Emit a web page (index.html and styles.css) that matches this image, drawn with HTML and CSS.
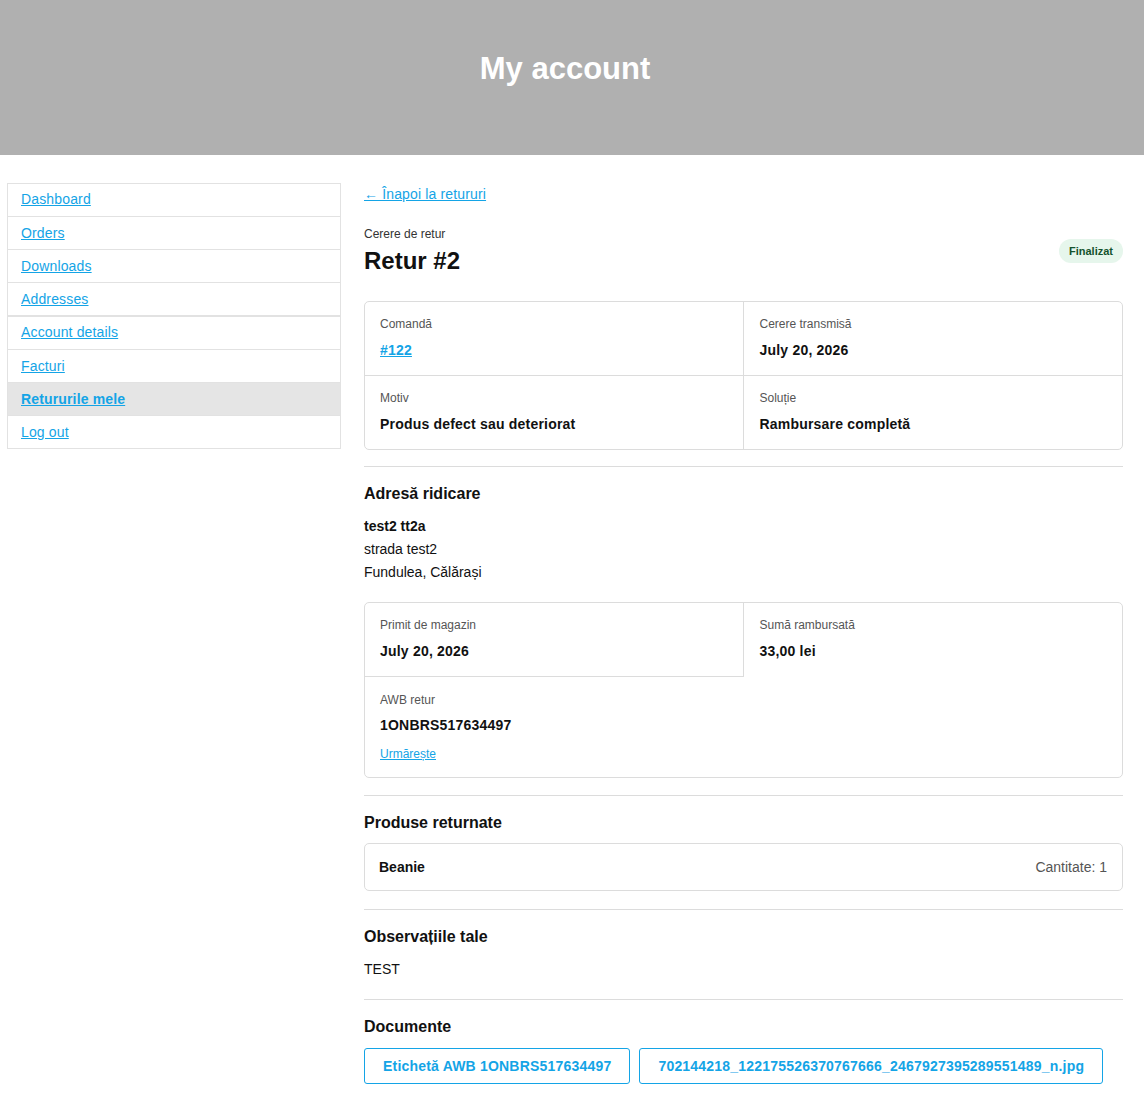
FILE: index.html
```html
<!DOCTYPE html>
<html lang="ro">
<head>
  <meta charset="UTF-8">
  <meta name="viewport" content="width=device-width, initial-scale=1.0">
  <title>My account – Retur #2</title>
  <link rel="stylesheet" href="styles.css">
</head>
<body>
  <header class="page-header">
    <h1>My account</h1>
  </header>

  <div class="account">
    <nav class="account-nav">
      <ul>
        <li class="nav-item"><a href="#">Dashboard</a></li>
        <li class="nav-item"><a href="#">Orders</a></li>
        <li class="nav-item"><a href="#">Downloads</a></li>
        <li class="nav-item nav-item--split"><a href="#">Addresses</a></li>
        <li class="nav-item"><a href="#">Account details</a></li>
        <li class="nav-item"><a href="#">Facturi</a></li>
        <li class="nav-item is-active"><a href="#">Retururile mele</a></li>
        <li class="nav-item"><a href="#">Log out</a></li>
      </ul>
    </nav>

    <main class="account-content">
      <a class="back-link" href="#">&larr; Înapoi la retururi</a>

      <div class="return-head">
        <div>
          <div class="return-kicker">Cerere de retur</div>
          <h2 class="return-title">Retur #2</h2>
        </div>
        <span class="badge">Finalizat</span>
      </div>

      <div class="info-grid">
        <div class="info-cell">
          <div class="info-label">Comandă</div>
          <div class="info-value"><a href="#">#122</a></div>
        </div>
        <div class="info-cell">
          <div class="info-label">Cerere transmisă</div>
          <div class="info-value">July 20, 2026</div>
        </div>
        <div class="info-cell">
          <div class="info-label">Motiv</div>
          <div class="info-value">Produs defect sau deteriorat</div>
        </div>
        <div class="info-cell">
          <div class="info-label">Soluție</div>
          <div class="info-value">Rambursare completă</div>
        </div>
      </div>

      <section class="section section--address">
        <h3>Adresă ridicare</h3>
        <address class="address">
          <strong>test2 tt2a</strong><br>
          strada test2<br>
          Fundulea, Călărași
        </address>

        <div class="info-grid info-grid--shipping">
          <div class="info-cell info-cell--boxed">
            <div class="info-label">Primit de magazin</div>
            <div class="info-value">July 20, 2026</div>
          </div>
          <div class="info-cell">
            <div class="info-label">Sumă rambursată</div>
            <div class="info-value">33,00 lei</div>
          </div>
          <div class="info-cell info-cell--awb">
            <div class="info-label">AWB retur</div>
            <div class="info-value">1ONBRS517634497</div>
            <a class="track-link" href="#">Urmărește</a>
          </div>
        </div>
      </section>

      <section class="section section--products">
        <h3>Produse returnate</h3>
        <div class="product-row">
          <span class="product-name">Beanie</span>
          <span class="product-qty">Cantitate: 1</span>
        </div>
      </section>

      <section class="section">
        <h3>Observațiile tale</h3>
        <p class="notes">TEST</p>
      </section>

      <section class="section section--docs">
        <h3>Documente</h3>
        <div class="docs">
          <a class="doc-btn" href="#">Etichetă AWB 1ONBRS517634497</a>
          <a class="doc-btn" href="#">702144218_122175526370767666_2467927395289551489_n.jpg</a>
        </div>
      </section>
    </main>
  </div>
</body>
</html>
```

FILE: styles.css
```css
body {
  margin: 0;
  font-family: "Liberation Sans", Arial, sans-serif;
  font-size: 14px;
  color: #111;
  background: #fff;
}

a {
  color: #14a4e6;
}

/* grey banner on top */
.page-header {
  background-color: #b0b0b0;
  height: 155px;
  display: flex;
  justify-content: center;
  padding: 49px 14px 0 0;
  box-sizing: border-box;
}
.page-header h1 {
  margin: 0;
  color: #fff;
  font-size: 31px;
  line-height: 40px;
  font-weight: bold;
}

.account {
  display: grid;
  grid-template-columns: 334px 1fr;
  gap: 23px;
  padding: 28px 21px 20px 7px;
}

/* sidebar menu */
.account-nav ul {
  list-style: none;
  margin: 0;
  padding: 0;
  border: 1px solid #e2e2e2;
  border-bottom: none;
}
.nav-item {
  border-bottom: 1px solid #e2e2e2;
  padding: 6px 13px;
  line-height: 20px;
  letter-spacing: 0.15px;
}
.nav-item:first-child {
  padding-top: 5px;
  padding-bottom: 7px;
}
.nav-item--split {
  border-bottom-width: 2px;
}
.nav-item--split + .nav-item {
  padding-top: 5px;
  padding-bottom: 7px;
}
.nav-item.is-active {
  background-color: #e5e5e5;
  font-weight: bold;
}

/* main column */
.back-link {
  display: inline-block;
  line-height: 22px;
  letter-spacing: 0.15px;
}

.return-head {
  display: flex;
  justify-content: space-between;
  align-items: center;
  margin-top: 21px;
}
.return-kicker {
  font-size: 12px;
  line-height: 16px;
  color: #333;
}
.return-title {
  margin: 4px 0 0;
  font-size: 24px;
  line-height: 30px;
}
.badge {
  background-color: #e6f6ec;
  color: #14532d;
  font-size: 11px;
  font-weight: bold;
  padding: 6px 10px;
  border-radius: 12px;
  line-height: 12px;
}

.info-grid {
  display: grid;
  grid-template-columns: 1fr 1fr;
  border: 1px solid #dcdcdc;
  border-radius: 5px;
  margin-top: 25px;
}
.info-cell {
  padding: 14px 16px 15px;
}
.info-grid > .info-cell:nth-child(odd) {
  padding-left: 15px;
}
.info-grid > .info-cell:nth-child(1) {
  border-right: 1px solid #dcdcdc;
  border-bottom: 1px solid #dcdcdc;
}
.info-grid > .info-cell:nth-child(2) {
  border-bottom: 1px solid #dcdcdc;
}
.info-grid > .info-cell:nth-child(3) {
  border-right: 1px solid #dcdcdc;
}
.info-label {
  font-size: 12px;
  line-height: 16px;
  color: #555;
}
.info-value {
  margin-top: 8px;
  font-weight: bold;
  line-height: 20px;
  letter-spacing: 0.2px;
}

/* refund box: only the first cell is boxed */
.info-grid--shipping {
  margin-top: 18px;
}
.info-grid--shipping > .info-cell:nth-child(n) {
  border: none;
}
.info-grid--shipping > .info-cell--boxed:nth-child(1) {
  border-right: 1px solid #dcdcdc;
  border-bottom: 1px solid #dcdcdc;
}
.info-cell--awb {
  padding-top: 15px;
  padding-bottom: 15px;
}
.info-cell--awb .info-value {
  margin-top: 7px;
}
.track-link {
  display: inline-block;
  margin-top: 11px;
  font-size: 12px;
  line-height: 16px;
}

.section {
  border-top: 1px solid #dcdcdc;
  margin-top: 18px;
  padding-top: 16px;
}
.section--address {
  margin-top: 16px;
}
.section--products {
  margin-top: 17px;
}
.section h3 {
  margin: 0 0 9px;
  font-size: 16px;
  line-height: 22px;
}
.section--docs h3 {
  margin-bottom: 10px;
}

.address {
  font-style: normal;
  padding-top: 1px;
  line-height: 23px;
}

.product-row {
  display: flex;
  justify-content: space-between;
  border: 1px solid #dcdcdc;
  border-radius: 5px;
  padding: 13px 15px 13px 14px;
  line-height: 20px;
}
.product-name {
  font-weight: bold;
}
.product-qty {
  color: #555;
}

.notes {
  margin: 0;
  padding: 1px 0 1px;
  line-height: 22px;
}

.docs {
  display: flex;
  gap: 9px;
}
.doc-btn {
  border: 1px solid #14a4e6;
  border-radius: 3px;
  padding: 7px 18px;
  line-height: 20px;
  font-weight: bold;
  letter-spacing: 0.2px;
  text-decoration: none;
}
```
